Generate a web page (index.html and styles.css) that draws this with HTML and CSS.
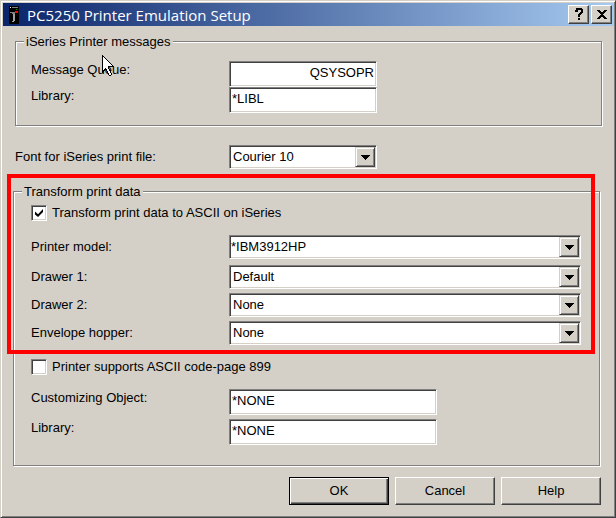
FILE: index.html
```html
<!DOCTYPE html>
<html lang="en">
<head>
  <meta charset="UTF-8">
  <title>PC5250 Printer Emulation Setup</title>
  <meta name="viewport" content="width=device-width, initial-scale=1">
  <link rel="stylesheet" href="styles.css">
</head>
<body>

  <div class="window">
    <div class="titlebar">
      <svg class="app-icon" width="10" height="18" viewBox="0 0 10 18" shape-rendering="crispEdges">
        <rect width="10" height="18" fill="#000"/>
        <path fill="#fff" d="M1 1h1v1h-1z"/>
        <path fill="#808080" d="M3 1h6v1h-6zM1 6h5v1h-5zM3 7h3v1h-3z"/>
        <path fill="#a0a0a0" d="M4 8h2v7h-2zM3 15h2v1h-2z"/>
        <path fill="#00a000" d="M7 3h1v1h-1z"/>
        <path fill="#f00" d="M6 5h3v2h-3z"/>
      </svg>
      <h1>PC5250 Printer Emulation Setup</h1>
      <button type="button" class="title-btn" aria-label="What's this?">
        <svg width="10" height="13" viewBox="0 0 10 13" shape-rendering="crispEdges">
          <path d="M2 0h6v1h1v4h-1v1h-1v1h-1v2h-2v-3h1v-1h1v-1h1v-2h-3v2h-3v-2h1zM4 10h2v2h-2z"/>
        </svg>
      </button>
      <button type="button" class="title-btn" aria-label="Close">
        <svg width="10" height="9" viewBox="0 0 10 9" shape-rendering="crispEdges">
          <path d="M0 0h3v1h1v1h2v-1h1v-1h3v1h-1v1h-1v1h-1v1h-1v1h1v1h1v1h1v1h1v1h-3v-1h-1v-1h-2v1h-1v1h-3v-1h1v-1h1v-1h1v-1h1v-1h-1v-1h-1v-1h-1v-1h-1z"/>
        </svg>
      </button>
    </div>

    <form class="content">
      <fieldset class="messages">
        <legend>iSeries Printer messages</legend>
        <div class="row">
          <label for="queue">Message Queue:</label>
          <input type="text" id="queue" class="short right" value="QSYSOPR">
        </div>
        <div class="row">
          <label for="queueLib">Library:</label>
          <input type="text" id="queueLib" class="short" value="*LIBL">
        </div>
      </fieldset>

      <div class="row font-row">
        <label for="font">Font for iSeries print file:</label>
        <div class="combo short">
          <select id="font"><option>Courier 10</option></select>
          <span class="arrow"><svg width="9" height="5" viewBox="0 0 9 5" shape-rendering="crispEdges"><path d="M0 0h9v1h-1v1h-1v1h-1v1h-1v1h-1v-1h-1v-1h-1v-1h-1v-1h-1z"/></svg></span>
        </div>
      </div>

      <fieldset class="transform">
        <legend>Transform print data</legend>

        <div class="group">
          <div class="check">
            <input type="checkbox" id="ascii" checked>
            <label for="ascii">Transform print data to ASCII on iSeries</label>
          </div>
          <div class="row model">
            <label for="model">Printer model:</label>
            <div class="combo editable">
              <select id="model"><option>*IBM3912HP</option></select>
              <span class="arrow"><svg width="9" height="5" viewBox="0 0 9 5" shape-rendering="crispEdges"><path d="M0 0h9v1h-1v1h-1v1h-1v1h-1v1h-1v-1h-1v-1h-1v-1h-1v-1h-1z"/></svg></span>
            </div>
          </div>
          <div class="row">
            <label for="drawer1">Drawer 1:</label>
            <div class="combo">
              <select id="drawer1"><option>Default</option></select>
              <span class="arrow"><svg width="9" height="5" viewBox="0 0 9 5" shape-rendering="crispEdges"><path d="M0 0h9v1h-1v1h-1v1h-1v1h-1v1h-1v-1h-1v-1h-1v-1h-1v-1h-1z"/></svg></span>
            </div>
          </div>
          <div class="row">
            <label for="drawer2">Drawer 2:</label>
            <div class="combo">
              <select id="drawer2"><option>None</option></select>
              <span class="arrow"><svg width="9" height="5" viewBox="0 0 9 5" shape-rendering="crispEdges"><path d="M0 0h9v1h-1v1h-1v1h-1v1h-1v1h-1v-1h-1v-1h-1v-1h-1v-1h-1z"/></svg></span>
            </div>
          </div>
          <div class="row">
            <label for="hopper">Envelope hopper:</label>
            <div class="combo">
              <select id="hopper"><option>None</option></select>
              <span class="arrow"><svg width="9" height="5" viewBox="0 0 9 5" shape-rendering="crispEdges"><path d="M0 0h9v1h-1v1h-1v1h-1v1h-1v1h-1v-1h-1v-1h-1v-1h-1v-1h-1z"/></svg></span>
            </div>
          </div>
          <!-- red highlight around the transform settings -->
          <div class="highlight"></div>
        </div>

        <div class="check">
          <input type="checkbox" id="codepage">
          <label for="codepage">Printer supports ASCII code-page 899</label>
        </div>

        <div class="custom">
          <div class="row">
            <label for="object">Customizing Object:</label>
            <input type="text" id="object" value="*NONE">
          </div>
          <div class="row">
            <label for="objectLib">Library:</label>
            <input type="text" id="objectLib" value="*NONE">
          </div>
        </div>
      </fieldset>

      <div class="buttons">
        <button type="submit" class="default">OK</button>
        <button type="button">Cancel</button>
        <button type="button">Help</button>
      </div>
    </form>

    <!-- Mouse pointer -->
    <svg class="pointer" width="12" height="21" viewBox="0 0 12 21" shape-rendering="crispEdges">
      <path fill="#000" d="M0 0h1v1h1v1h1v1h1v1h1v1h1v1h1v1h1v1h1v1h1v1h1v1h1v1h-5v2h1v2h1v2h1v2h-1v1h-2v-1h-1v-2h-1v-2h-1v-1h-1v1h-1v1h-1v1h-1z"/>
      <path fill="#fff" d="M1 2h1v1h1v1h1v1h1v1h1v1h1v1h1v1h1v1h1v1h-4v3h1v2h1v2h1v2h-2v-2h-1v-2h-1v-2h-1v-1h-1v1h-1v1h-1z"/>
    </svg>
  </div>

</body>
</html>
```

FILE: styles.css
```css
* { box-sizing: border-box; }

body {
  margin: 0;
  background-color: #d4d0c8;
  font-family: "Liberation Sans", Arial, sans-serif;
  font-size: 13px;
  line-height: 18px;
  color: #000;
}

.window {
  position: relative;
  min-height: 100vh;
  padding: 2px 1px 1px 2px;
  border: 1px solid;
  border-color: #d4d0c8 #404040 #404040 #d4d0c8;
  box-shadow: inset 1px 1px #fff, inset -1px -1px #808080;
}

.titlebar {
  display: flex;
  align-items: center;
  gap: 2px;
  height: 23px;
  padding: 0 2px 0 6px;
  background: linear-gradient(to right, #0a246a, #a6caf0);
}

.titlebar h1 {
  flex: 1;
  margin: 0 0 0 6px;
  font-family: "Open Sans", sans-serif;
  font-size: 15px;
  font-weight: 500;
  color: #fff;
}

button {
  padding: 0;
  border: 1px solid;
  border-color: #fff #404040 #404040 #fff;
  border-radius: 0;
  background-color: #d4d0c8;
  box-shadow: inset -1px -1px #808080;
  font: inherit;
  color: #000;
}

.title-btn {
  display: flex;
  align-items: center;
  justify-content: center;
  width: 21px;
  height: 19px;
}

.content {
  padding: 7px 12px 10px 10px;
}

fieldset {
  min-width: 0;
  margin: 0;
  border: 1px solid #808080;
  box-shadow: 1px 1px #fff, inset 1px 1px #fff;
}

legend {
  padding: 0 2px;
  background-color: #d4d0c8;
  line-height: 17px;
}

.messages {
  margin-left: 2px;
  padding: 11px 15px 12px 15px;
}

.messages legend {
  margin-left: -7px;
}

.transform {
  margin: 14px 2px 0 0;
  padding: 5px 18px 20px 17px;
}

.transform legend {
  margin-left: -9px;
}

.row {
  display: grid;
  grid-template-columns: 198px 1fr;
}

.font-row {
  grid-template-columns: 214px 1fr;
  margin: 19px 0 0 2px;
}

input[type="text"] {
  width: 208px;
  height: 26px;
  padding: 0 2px 3px 2px;
  border: 1px solid;
  border-color: #808080 #fff #fff #808080;
  border-radius: 0;
  background-color: #fff;
  box-shadow: inset 1px 1px #404040, inset -1px -1px #d4d0c8;
  font: inherit;
  outline: none;
}

input.short,
.combo.short {
  width: 148px;
}

input.right {
  text-align: right;
}

.combo {
  display: flex;
  height: 24px;
  padding: 1px;
  border: 1px solid;
  border-color: #808080 #fff #fff #808080;
  background-color: #fff;
  box-shadow: inset 1px 1px #404040, inset -1px -1px #d4d0c8;
}

.combo select {
  flex: 1;
  appearance: none;
  min-width: 0;
  padding: 0 2px;
  border: none;
  background: none;
  font: inherit;
  color: #000;
  outline: none;
}

.combo.editable select {
  padding: 0;
}

.arrow {
  display: flex;
  align-items: center;
  justify-content: center;
  width: 20px;
  border: 1px solid;
  border-color: #d4d0c8 #404040 #404040 #d4d0c8;
  background-color: #d4d0c8;
  box-shadow: inset 1px 1px #fff, inset -1px -1px #808080;
  pointer-events: none;
}

.row:has(.combo) {
  align-items: center;
}

.group {
  position: relative;
  display: flex;
  flex-direction: column;
  gap: 4px;
  margin-bottom: 14px;
}

.group .model {
  margin: 10px 0 2px;
}

.highlight {
  position: absolute;
  inset: -31px -14px -9px -24px;
  border: 4px solid #f00;
  pointer-events: none;
}

.check {
  display: flex;
  align-items: center;
  gap: 5px;
  height: 16px;
}

input[type="checkbox"] {
  appearance: none;
  width: 16px;
  height: 16px;
  margin: 0;
  border: 1px solid;
  border-color: #808080 #fff #fff #808080;
  background-color: #fff;
  box-shadow: inset 1px 1px #404040, inset -1px -1px #d4d0c8;
}

input[type="checkbox"]:checked::before {
  content: "";
  display: block;
  width: 8px;
  height: 8px;
  margin: 3px;
  background-color: #000;
  clip-path: polygon(0 30%, 38% 65%, 100% 0, 100% 38%, 38% 100%, 0 68%);
}

.custom {
  display: grid;
  gap: 4px;
  margin-top: 14px;
}

.buttons {
  display: flex;
  justify-content: flex-end;
  gap: 6px;
  margin: 11px 1px 0 0;
}

.buttons button {
  width: 100px;
  height: 28px;
}

.buttons .default {
  border-color: #000;
  box-shadow: inset 1px 1px #fff, inset -1px -1px #404040, inset -2px -2px #808080;
}

.pointer {
  position: absolute;
  left: 101px;
  top: 54px;
  pointer-events: none;
}
```
